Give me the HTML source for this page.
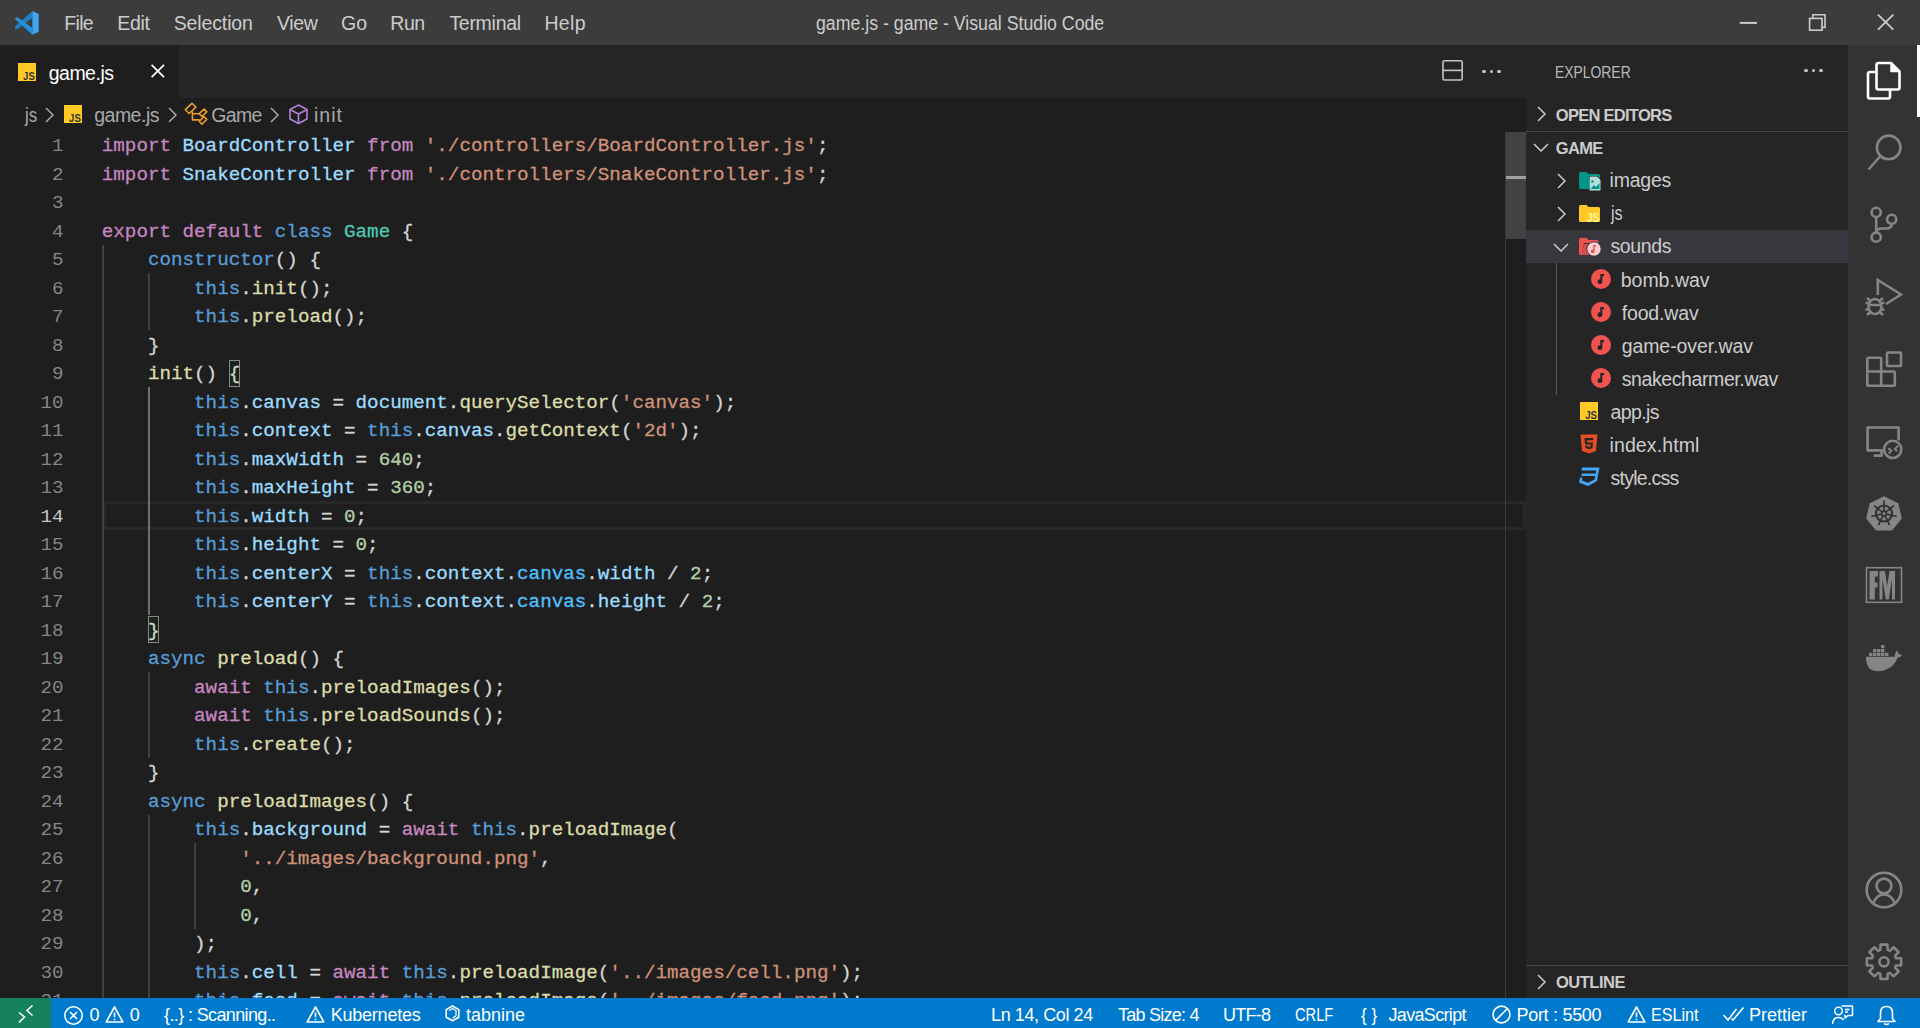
<!DOCTYPE html><html><head><meta charset="utf-8"><title>game.js - game - Visual Studio Code</title><style>html,body{margin:0;padding:0}
body{width:1920px;height:1028px;position:relative;overflow:hidden;background:#1e1e1e;font-family:"Liberation Sans", sans-serif}
.t{position:absolute;white-space:pre;line-height:1;font-family:"Liberation Sans", sans-serif}
.cl{position:absolute;left:101.8px;white-space:pre;font-family:"Liberation Mono", monospace;font-size:19.233px;line-height:1;-webkit-text-stroke:0.3px currentColor}
.cl span{-webkit-text-stroke:0.3px currentColor}
.ln{position:absolute;left:0;width:63.5px;text-align:right;white-space:pre;font-family:"Liberation Mono", monospace;font-size:19.233px;line-height:1}
</style></head><body><div style="position:absolute;left:0;top:0;width:1920px;height:45px;background:#3c3c3c"></div><svg style="position:absolute;left:8px;top:4px" width="40" height="38" viewBox="0 0 40 38">
<path d="M24.4 7 L24.4 13.9 L9.4 25.1 Q8.2 25.8 7 24.6 L7 22.6 Z" fill="#1f7fc4"/>
<path d="M9.1 12.9 L24.4 23.8 L24.4 30.7 L6.8 15 Q6.8 13.6 9.1 12.9 Z" fill="#2490da"/>
<path d="M24.4 7 L30.7 10 L30.7 27.7 L24.4 30.7 Z" fill="#3ea7f2"/>
</svg><svg style="position:absolute;left:1720px;top:0px" width="200" height="45" viewBox="1720 0 200 45" fill="none" stroke="#cccccc">
<path d="M1739.8 22.9 H1757" stroke-width="2"/>
<rect x="1809.6" y="18.4" width="12.4" height="11.8" stroke-width="1.6"/>
<path d="M1812.9 18.4 V14.7 H1825 V27.4 H1822" stroke-width="1.6"/>
<path d="M1878 14.6 L1893.3 29.6 M1893.3 14.6 L1878 29.6" stroke-width="1.8"/>
</svg><div style="position:absolute;left:0;top:45px;width:1526px;height:52.5px;background:#252526"></div><div style="position:absolute;left:0;top:45px;width:179px;height:52.5px;background:#1e1e1e"></div><svg style="position:absolute;left:18px;top:62.8px" width="18.3" height="18.3" viewBox="0 0 18 18"><rect width="18" height="18" fill="#ffca28"/><text x="5" y="16.3" font-family="Liberation Sans" font-weight="bold" font-size="11.2" textLength="11.5" lengthAdjust="spacingAndGlyphs" fill="#323232">JS</text></svg><svg style="position:absolute;left:147px;top:60px" width="21" height="21" viewBox="0 0 21 21" fill="none" stroke="#ffffff" stroke-width="1.7">
<path d="M4.6 4.8 L17 17.2 M17 4.8 L4.6 17.2"/></svg><svg style="position:absolute;left:1440px;top:58px" width="25" height="25" viewBox="0 0 25 25" fill="none" stroke="#c5c5c5" stroke-width="1.6">
<rect x="3" y="2.8" width="19.2" height="19.2" rx="1.5"/><path d="M3 12.4 H22.2"/></svg><div style="position:absolute;left:1482.4px;top:69.5px;width:3.2px;height:3.2px;border-radius:50%;background:#c5c5c5"></div><div style="position:absolute;left:1489.9px;top:69.5px;width:3.2px;height:3.2px;border-radius:50%;background:#c5c5c5"></div><div style="position:absolute;left:1497.4px;top:69.5px;width:3.2px;height:3.2px;border-radius:50%;background:#c5c5c5"></div><svg style="position:absolute;left:45px;top:106.5px" width="9" height="16" viewBox="0 0 9 16" fill="none" stroke="#a9a9a9" stroke-width="1.5"><path d="M1 1 L8 8.0 L1 15"/></svg><svg style="position:absolute;left:64px;top:104.9px" width="18.3" height="18.3" viewBox="0 0 18 18"><rect width="18" height="18" fill="#ffca28"/><text x="5" y="16.3" font-family="Liberation Sans" font-weight="bold" font-size="11.2" textLength="11.5" lengthAdjust="spacingAndGlyphs" fill="#323232">JS</text></svg><svg style="position:absolute;left:168px;top:106.5px" width="9" height="16" viewBox="0 0 9 16" fill="none" stroke="#a9a9a9" stroke-width="1.5"><path d="M1 1 L8 8.0 L1 15"/></svg><svg style="position:absolute;left:184px;top:101px" width="24" height="26" viewBox="0 0 24 26" fill="none" stroke="#ee9d28" stroke-width="1.6" stroke-linejoin="round">
<path d="M1.3 8.7 L8 2.3 L11.9 6.1 L5.1 12.5 Z"/><path d="M8.4 10.2 V18.9 H15.7 M8.4 12.7 H15.7"/>
<path d="M15.2 12.7 L20.1 8.1 L22.8 10.9 L17.9 15.5 Z"/><path d="M15.2 20.3 L20.1 15.7 L22.8 18.5 L17.9 23.1 Z"/></svg><svg style="position:absolute;left:270px;top:106.5px" width="9" height="16" viewBox="0 0 9 16" fill="none" stroke="#a9a9a9" stroke-width="1.5"><path d="M1 1 L8 8.0 L1 15"/></svg><svg style="position:absolute;left:287px;top:102.5px" width="23" height="23" viewBox="0 0 23 23" fill="none" stroke="#b180d7" stroke-width="1.6" stroke-linejoin="round">
<path d="M11.5 2 L20 6.5 V16 L11.5 20.5 L3 16 V6.5 Z"/><path d="M3 6.5 L11.5 11 L20 6.5 M11.5 11 V20.5"/></svg><div style="position:absolute;left:103px;top:501.0px;width:1423px;height:28.5px;box-sizing:border-box;border:3px solid #282828"></div><div style="position:absolute;left:101.80px;top:244.50px;width:2px;height:798.00px;background:#404040"></div><div style="position:absolute;left:147.96px;top:273.00px;width:2px;height:57.00px;background:#404040"></div><div style="position:absolute;left:147.96px;top:387.00px;width:2px;height:228.00px;background:#707070"></div><div style="position:absolute;left:147.96px;top:672.00px;width:2px;height:85.50px;background:#404040"></div><div style="position:absolute;left:147.96px;top:814.50px;width:2px;height:228.00px;background:#404040"></div><div style="position:absolute;left:194.12px;top:843.00px;width:2px;height:85.50px;background:#404040"></div><div style="position:absolute;left:228.74px;top:359.50px;width:11.54px;height:27.00px;box-sizing:border-box;border:1.5px solid #888888;background:rgba(0,100,0,0.1)"></div><div style="position:absolute;left:147.96px;top:616.00px;width:11.54px;height:27.00px;box-sizing:border-box;border:1.5px solid #888888;background:rgba(0,100,0,0.1)"></div><div class="cl" style="top:137.16px"><span style="color:#c586c0">import</span><span style="color:#d4d4d4"> </span><span style="color:#9cdcfe">BoardController</span><span style="color:#d4d4d4"> </span><span style="color:#c586c0">from</span><span style="color:#d4d4d4"> </span><span style="color:#ce9178">&#x27;./controllers/BoardController.js&#x27;</span><span style="color:#d4d4d4">;</span></div><div class="ln" style="top:137.16px;color:#858585">1</div><div class="cl" style="top:165.66px"><span style="color:#c586c0">import</span><span style="color:#d4d4d4"> </span><span style="color:#9cdcfe">SnakeController</span><span style="color:#d4d4d4"> </span><span style="color:#c586c0">from</span><span style="color:#d4d4d4"> </span><span style="color:#ce9178">&#x27;./controllers/SnakeController.js&#x27;</span><span style="color:#d4d4d4">;</span></div><div class="ln" style="top:165.66px;color:#858585">2</div><div class="cl" style="top:194.16px"></div><div class="ln" style="top:194.16px;color:#858585">3</div><div class="cl" style="top:222.66px"><span style="color:#c586c0">export</span><span style="color:#d4d4d4"> </span><span style="color:#c586c0">default</span><span style="color:#d4d4d4"> </span><span style="color:#569cd6">class</span><span style="color:#d4d4d4"> </span><span style="color:#4ec9b0">Game</span><span style="color:#d4d4d4"> {</span></div><div class="ln" style="top:222.66px;color:#858585">4</div><div class="cl" style="top:251.16px"><span style="color:#d4d4d4">    </span><span style="color:#569cd6">constructor</span><span style="color:#d4d4d4">() {</span></div><div class="ln" style="top:251.16px;color:#858585">5</div><div class="cl" style="top:279.66px"><span style="color:#d4d4d4">        </span><span style="color:#569cd6">this</span><span style="color:#d4d4d4">.</span><span style="color:#dcdcaa">init</span><span style="color:#d4d4d4">();</span></div><div class="ln" style="top:279.66px;color:#858585">6</div><div class="cl" style="top:308.16px"><span style="color:#d4d4d4">        </span><span style="color:#569cd6">this</span><span style="color:#d4d4d4">.</span><span style="color:#dcdcaa">preload</span><span style="color:#d4d4d4">();</span></div><div class="ln" style="top:308.16px;color:#858585">7</div><div class="cl" style="top:336.66px"><span style="color:#d4d4d4">    }</span></div><div class="ln" style="top:336.66px;color:#858585">8</div><div class="cl" style="top:365.16px"><span style="color:#d4d4d4">    </span><span style="color:#dcdcaa">init</span><span style="color:#d4d4d4">() {</span></div><div class="ln" style="top:365.16px;color:#858585">9</div><div class="cl" style="top:393.66px"><span style="color:#d4d4d4">        </span><span style="color:#569cd6">this</span><span style="color:#d4d4d4">.</span><span style="color:#9cdcfe">canvas</span><span style="color:#d4d4d4"> = </span><span style="color:#9cdcfe">document</span><span style="color:#d4d4d4">.</span><span style="color:#dcdcaa">querySelector</span><span style="color:#d4d4d4">(</span><span style="color:#ce9178">&#x27;canvas&#x27;</span><span style="color:#d4d4d4">);</span></div><div class="ln" style="top:393.66px;color:#858585">10</div><div class="cl" style="top:422.16px"><span style="color:#d4d4d4">        </span><span style="color:#569cd6">this</span><span style="color:#d4d4d4">.</span><span style="color:#9cdcfe">context</span><span style="color:#d4d4d4"> = </span><span style="color:#569cd6">this</span><span style="color:#d4d4d4">.</span><span style="color:#9cdcfe">canvas</span><span style="color:#d4d4d4">.</span><span style="color:#dcdcaa">getContext</span><span style="color:#d4d4d4">(</span><span style="color:#ce9178">&#x27;2d&#x27;</span><span style="color:#d4d4d4">);</span></div><div class="ln" style="top:422.16px;color:#858585">11</div><div class="cl" style="top:450.66px"><span style="color:#d4d4d4">        </span><span style="color:#569cd6">this</span><span style="color:#d4d4d4">.</span><span style="color:#9cdcfe">maxWidth</span><span style="color:#d4d4d4"> = </span><span style="color:#b5cea8">640</span><span style="color:#d4d4d4">;</span></div><div class="ln" style="top:450.66px;color:#858585">12</div><div class="cl" style="top:479.16px"><span style="color:#d4d4d4">        </span><span style="color:#569cd6">this</span><span style="color:#d4d4d4">.</span><span style="color:#9cdcfe">maxHeight</span><span style="color:#d4d4d4"> = </span><span style="color:#b5cea8">360</span><span style="color:#d4d4d4">;</span></div><div class="ln" style="top:479.16px;color:#858585">13</div><div class="cl" style="top:507.66px"><span style="color:#d4d4d4">        </span><span style="color:#569cd6">this</span><span style="color:#d4d4d4">.</span><span style="color:#9cdcfe">width</span><span style="color:#d4d4d4"> = </span><span style="color:#b5cea8">0</span><span style="color:#d4d4d4">;</span></div><div class="ln" style="top:507.66px;color:#c6c6c6">14</div><div class="cl" style="top:536.16px"><span style="color:#d4d4d4">        </span><span style="color:#569cd6">this</span><span style="color:#d4d4d4">.</span><span style="color:#9cdcfe">height</span><span style="color:#d4d4d4"> = </span><span style="color:#b5cea8">0</span><span style="color:#d4d4d4">;</span></div><div class="ln" style="top:536.16px;color:#858585">15</div><div class="cl" style="top:564.66px"><span style="color:#d4d4d4">        </span><span style="color:#569cd6">this</span><span style="color:#d4d4d4">.</span><span style="color:#9cdcfe">centerX</span><span style="color:#d4d4d4"> = </span><span style="color:#569cd6">this</span><span style="color:#d4d4d4">.</span><span style="color:#9cdcfe">context</span><span style="color:#d4d4d4">.</span><span style="color:#4fc1ff">canvas</span><span style="color:#d4d4d4">.</span><span style="color:#9cdcfe">width</span><span style="color:#d4d4d4"> / </span><span style="color:#b5cea8">2</span><span style="color:#d4d4d4">;</span></div><div class="ln" style="top:564.66px;color:#858585">16</div><div class="cl" style="top:593.16px"><span style="color:#d4d4d4">        </span><span style="color:#569cd6">this</span><span style="color:#d4d4d4">.</span><span style="color:#9cdcfe">centerY</span><span style="color:#d4d4d4"> = </span><span style="color:#569cd6">this</span><span style="color:#d4d4d4">.</span><span style="color:#9cdcfe">context</span><span style="color:#d4d4d4">.</span><span style="color:#4fc1ff">canvas</span><span style="color:#d4d4d4">.</span><span style="color:#9cdcfe">height</span><span style="color:#d4d4d4"> / </span><span style="color:#b5cea8">2</span><span style="color:#d4d4d4">;</span></div><div class="ln" style="top:593.16px;color:#858585">17</div><div class="cl" style="top:621.66px"><span style="color:#d4d4d4">    }</span></div><div class="ln" style="top:621.66px;color:#858585">18</div><div class="cl" style="top:650.16px"><span style="color:#d4d4d4">    </span><span style="color:#569cd6">async</span><span style="color:#d4d4d4"> </span><span style="color:#dcdcaa">preload</span><span style="color:#d4d4d4">() {</span></div><div class="ln" style="top:650.16px;color:#858585">19</div><div class="cl" style="top:678.66px"><span style="color:#d4d4d4">        </span><span style="color:#c586c0">await</span><span style="color:#d4d4d4"> </span><span style="color:#569cd6">this</span><span style="color:#d4d4d4">.</span><span style="color:#dcdcaa">preloadImages</span><span style="color:#d4d4d4">();</span></div><div class="ln" style="top:678.66px;color:#858585">20</div><div class="cl" style="top:707.16px"><span style="color:#d4d4d4">        </span><span style="color:#c586c0">await</span><span style="color:#d4d4d4"> </span><span style="color:#569cd6">this</span><span style="color:#d4d4d4">.</span><span style="color:#dcdcaa">preloadSounds</span><span style="color:#d4d4d4">();</span></div><div class="ln" style="top:707.16px;color:#858585">21</div><div class="cl" style="top:735.66px"><span style="color:#d4d4d4">        </span><span style="color:#569cd6">this</span><span style="color:#d4d4d4">.</span><span style="color:#dcdcaa">create</span><span style="color:#d4d4d4">();</span></div><div class="ln" style="top:735.66px;color:#858585">22</div><div class="cl" style="top:764.16px"><span style="color:#d4d4d4">    }</span></div><div class="ln" style="top:764.16px;color:#858585">23</div><div class="cl" style="top:792.66px"><span style="color:#d4d4d4">    </span><span style="color:#569cd6">async</span><span style="color:#d4d4d4"> </span><span style="color:#dcdcaa">preloadImages</span><span style="color:#d4d4d4">() {</span></div><div class="ln" style="top:792.66px;color:#858585">24</div><div class="cl" style="top:821.16px"><span style="color:#d4d4d4">        </span><span style="color:#569cd6">this</span><span style="color:#d4d4d4">.</span><span style="color:#9cdcfe">background</span><span style="color:#d4d4d4"> = </span><span style="color:#c586c0">await</span><span style="color:#d4d4d4"> </span><span style="color:#569cd6">this</span><span style="color:#d4d4d4">.</span><span style="color:#dcdcaa">preloadImage</span><span style="color:#d4d4d4">(</span></div><div class="ln" style="top:821.16px;color:#858585">25</div><div class="cl" style="top:849.66px"><span style="color:#d4d4d4">            </span><span style="color:#ce9178">&#x27;../images/background.png&#x27;</span><span style="color:#d4d4d4">,</span></div><div class="ln" style="top:849.66px;color:#858585">26</div><div class="cl" style="top:878.16px"><span style="color:#d4d4d4">            </span><span style="color:#b5cea8">0</span><span style="color:#d4d4d4">,</span></div><div class="ln" style="top:878.16px;color:#858585">27</div><div class="cl" style="top:906.66px"><span style="color:#d4d4d4">            </span><span style="color:#b5cea8">0</span><span style="color:#d4d4d4">,</span></div><div class="ln" style="top:906.66px;color:#858585">28</div><div class="cl" style="top:935.16px"><span style="color:#d4d4d4">        );</span></div><div class="ln" style="top:935.16px;color:#858585">29</div><div class="cl" style="top:963.66px"><span style="color:#d4d4d4">        </span><span style="color:#569cd6">this</span><span style="color:#d4d4d4">.</span><span style="color:#9cdcfe">cell</span><span style="color:#d4d4d4"> = </span><span style="color:#c586c0">await</span><span style="color:#d4d4d4"> </span><span style="color:#569cd6">this</span><span style="color:#d4d4d4">.</span><span style="color:#dcdcaa">preloadImage</span><span style="color:#d4d4d4">(</span><span style="color:#ce9178">&#x27;../images/cell.png&#x27;</span><span style="color:#d4d4d4">);</span></div><div class="ln" style="top:963.66px;color:#858585">30</div><div class="cl" style="top:992.16px"><span style="color:#d4d4d4">        </span><span style="color:#569cd6">this</span><span style="color:#d4d4d4">.</span><span style="color:#9cdcfe">food</span><span style="color:#d4d4d4"> = </span><span style="color:#c586c0">await</span><span style="color:#d4d4d4"> </span><span style="color:#569cd6">this</span><span style="color:#d4d4d4">.</span><span style="color:#dcdcaa">preloadImage</span><span style="color:#d4d4d4">(</span><span style="color:#ce9178">&#x27;../images/food.png&#x27;</span><span style="color:#d4d4d4">);</span></div><div class="ln" style="top:992.16px;color:#858585">31</div><div style="position:absolute;left:1505px;top:130.5px;width:1px;height:867.5px;background:#3a3a3a"></div><div style="position:absolute;left:1506px;top:131.5px;width:20px;height:107px;background:#424242"></div><div style="position:absolute;left:1506px;top:176px;width:20px;height:3px;background:#a0a0a0"></div><div style="position:absolute;left:1526px;top:45px;width:322px;height:953px;background:#252526"></div><div style="position:absolute;left:1804.4px;top:69px;width:3.2px;height:3.2px;border-radius:50%;background:#c5c5c5"></div><div style="position:absolute;left:1811.9px;top:69px;width:3.2px;height:3.2px;border-radius:50%;background:#c5c5c5"></div><div style="position:absolute;left:1819.4px;top:69px;width:3.2px;height:3.2px;border-radius:50%;background:#c5c5c5"></div><svg style="position:absolute;left:1537px;top:106px" width="9" height="16" viewBox="0 0 9 16" fill="none" stroke="#cccccc" stroke-width="1.5"><path d="M1 1 L8 8.0 L1 15"/></svg><div style="position:absolute;left:1526px;top:130.5px;width:322px;height:1.5px;background:#454545"></div><svg style="position:absolute;left:1533px;top:143px" width="16" height="9" viewBox="0 0 16 9" fill="none" stroke="#cccccc" stroke-width="1.5"><path d="M1 1 L8.0 8 L15 1"/></svg><div style="position:absolute;left:1526px;top:230px;width:322px;height:33px;background:#37373d"></div><svg style="position:absolute;left:1557px;top:172.5px" width="9" height="16" viewBox="0 0 9 16" fill="none" stroke="#cccccc" stroke-width="1.5"><path d="M1 1 L8 8.0 L1 15"/></svg><svg style="position:absolute;left:1557px;top:205.5px" width="9" height="16" viewBox="0 0 9 16" fill="none" stroke="#cccccc" stroke-width="1.5"><path d="M1 1 L8 8.0 L1 15"/></svg><svg style="position:absolute;left:1553px;top:242.5px" width="16" height="9" viewBox="0 0 16 9" fill="none" stroke="#cccccc" stroke-width="1.5"><path d="M1 1 L8.0 8 L15 1"/></svg><svg style="position:absolute;left:1579px;top:171.5px" width="21" height="17" viewBox="0 0 21 17"><path d="M0 1.5 Q0 0 1.5 0 H7.5 L9.5 2 H19.5 Q21 2 21 3.5 V15.5 Q21 17 19.5 17 H1.5 Q0 17 0 15.5 Z" fill="#009688"/></svg><svg style="position:absolute;left:1589px;top:176px" width="12" height="15" viewBox="0 0 12 15"><path d="M1 0 H8 L12 4 V14 Q12 15 11 15 H1 Q0 15 0 14 V1 Q0 0 1 0 Z" fill="#b2dfdb" stroke="#252526" stroke-width="1"/><circle cx="3.5" cy="5.5" r="1.3" fill="#009688"/><path d="M1.5 13 L5 9 L7 11 L10.5 7 V13 Z" fill="#009688"/></svg><svg style="position:absolute;left:1579px;top:204.5px" width="21" height="17" viewBox="0 0 21 17"><path d="M0 1.5 Q0 0 1.5 0 H7.5 L9.5 2 H19.5 Q21 2 21 3.5 V15.5 Q21 17 19.5 17 H1.5 Q0 17 0 15.5 Z" fill="#ffca28"/></svg><svg style="position:absolute;left:1585px;top:208px" width="18" height="16" viewBox="0 0 18 16"><text x="1.8" y="14.3" font-family="Liberation Sans" font-weight="bold" font-size="13" textLength="12.8" lengthAdjust="spacingAndGlyphs" fill="#fff59d">JS</text></svg><svg style="position:absolute;left:1579px;top:237.5px" width="21" height="17" viewBox="0 0 21 17"><path d="M0 1.5 Q0 0 1.5 0 H7.5 L9.5 2 H18 Q19.5 2 19.5 3.5 V5 H5 L2.5 17 H1.5 Q0 17 0 15.5 Z" fill="#ef5350"/><path d="M5 6 H21 L18.5 17 H2.5 Z" fill="#ef5350" opacity="0.85"/></svg><svg style="position:absolute;left:1586px;top:241px" width="16" height="16" viewBox="0 0 16 16"><circle cx="8" cy="8" r="7.2" fill="#ffcdd2" stroke="#37373d" stroke-width="1"/><path d="M7.2 4 H10 V5.6 H8.6 V10 A1.9 1.9 0 1 1 7.2 8.6 Z" fill="#ef5350"/></svg><div style="position:absolute;left:1556px;top:263px;width:1px;height:132px;background:#585858"></div><svg style="position:absolute;left:1591px;top:269px" width="20" height="20" viewBox="0 0 20 20"><circle cx="10" cy="10" r="10" fill="#ef5350"/><path d="M9.3 5 H13 V7.2 H11.3 V12.2 A2.4 2.4 0 1 1 9.3 10.2 Z" fill="#252526"/></svg><svg style="position:absolute;left:1591px;top:302px" width="20" height="20" viewBox="0 0 20 20"><circle cx="10" cy="10" r="10" fill="#ef5350"/><path d="M9.3 5 H13 V7.2 H11.3 V12.2 A2.4 2.4 0 1 1 9.3 10.2 Z" fill="#252526"/></svg><svg style="position:absolute;left:1591px;top:335px" width="20" height="20" viewBox="0 0 20 20"><circle cx="10" cy="10" r="10" fill="#ef5350"/><path d="M9.3 5 H13 V7.2 H11.3 V12.2 A2.4 2.4 0 1 1 9.3 10.2 Z" fill="#252526"/></svg><svg style="position:absolute;left:1591px;top:368px" width="20" height="20" viewBox="0 0 20 20"><circle cx="10" cy="10" r="10" fill="#ef5350"/><path d="M9.3 5 H13 V7.2 H11.3 V12.2 A2.4 2.4 0 1 1 9.3 10.2 Z" fill="#252526"/></svg><svg style="position:absolute;left:1579.7px;top:401.6px" width="18.5" height="18.5" viewBox="0 0 18 18"><rect width="18" height="18" fill="#ffca28"/><text x="5" y="16.3" font-family="Liberation Sans" font-weight="bold" font-size="11.2" textLength="11.5" lengthAdjust="spacingAndGlyphs" fill="#323232">JS</text></svg><svg style="position:absolute;left:1580px;top:434px" width="18" height="20" viewBox="0 0 18 20"><path d="M0.5 0.5 H17.5 L16 17 L9 19.5 L2 17 Z" fill="#e44d26"/><path d="M4.5 4 H13.5 L13.2 6.3 H7 L7.2 8.5 H13 L12.4 14 L9 15.2 L5.6 14 L5.4 11.5 H7.5 L7.6 12.6 L9 13 L10.4 12.6 L10.6 10.6 H5.1 Z" fill="#252526"/></svg><svg style="position:absolute;left:1578px;top:467px" width="22" height="20" viewBox="0 0 22 20"><path d="M4 0.5 H21.5 L19 14 L10 19 L1 15.5 L2.2 10.5 L4.5 10.5 L4 13.5 L10 15.8 L16.5 12.5 L17.2 9 H3.3 L3.8 6.5 H17.7 L18.2 3.5 H3.5 Z" fill="#42a5f5"/></svg><div style="position:absolute;left:1526px;top:964.5px;width:322px;height:1.5px;background:#454545"></div><svg style="position:absolute;left:1537px;top:974px" width="9" height="16" viewBox="0 0 9 16" fill="none" stroke="#cccccc" stroke-width="1.5"><path d="M1 1 L8 8.0 L1 15"/></svg><div style="position:absolute;left:1848px;top:45px;width:72px;height:953px;background:#333333"></div><div style="position:absolute;left:1917px;top:45px;width:3px;height:72px;background:#ffffff"></div><svg style="position:absolute;left:1848px;top:45px" width="72" height="72" viewBox="0 0 72 72" fill="none" stroke="#ffffff" stroke-width="2.6" stroke-linejoin="round">
<path d="M28 27 H22 Q20 27 20 29 V51.5 Q20 53.5 22 53.5 H40 Q42 53.5 42 51.5 V45"/>
<path d="M30.5 18 H43 L51.5 26.5 V42.5 Q51.5 44.5 49.5 44.5 H30.5 Q28.5 44.5 28.5 42.5 V20 Q28.5 18 30.5 18 Z"/><path d="M43 18 V26.5 H51.5 Z" fill="#ffffff" stroke-width="1.5"/></svg><svg style="position:absolute;left:1848px;top:117px" width="72" height="72" viewBox="0 0 72 72" fill="none" stroke="#858585" stroke-width="2.6">
<circle cx="40.7" cy="30.4" r="11.8"/><path d="M32.5 39 L20.5 52.5"/></svg><svg style="position:absolute;left:1848px;top:189px" width="72" height="72" viewBox="0 0 72 72" fill="none" stroke="#858585" stroke-width="2.6">
<circle cx="28.2" cy="23.4" r="4.6"/><circle cx="43.7" cy="30.3" r="4.6"/><circle cx="28.2" cy="48.2" r="4.6"/>
<path d="M28.2 28 V43.6"/><path d="M43.7 35 Q43.7 39.5 38 39.5 H34 Q28.2 39.5 28.2 43.6"/></svg><svg style="position:absolute;left:1848px;top:261px" width="72" height="72" viewBox="0 0 72 72" fill="none" stroke="#858585" stroke-width="2.6">
<path d="M29.8 34 V19 L53 33.5 L38 43"/>
<ellipse cx="27" cy="45.5" rx="6.5" ry="7.5"/><path d="M20.5 44 H33.5 M17.5 42 H20.5 M33.5 42 H36.5 M17.5 48.5 H20.5 M33.5 48.5 H36.5 M19 37 L22 39.5 M35 37 L32 39.5 M19 54 L22 51.5 M35 54 L32 51.5"/></svg><svg style="position:absolute;left:1848px;top:333px" width="72" height="72" viewBox="0 0 72 72" fill="none" stroke="#858585" stroke-width="2.6" stroke-linejoin="round">
<path d="M19.3 26 Q19.3 24.7 20.6 24.7 H32 Q33.2 24.7 33.2 26 V38.5 H45.5 Q46.8 38.5 46.8 39.8 V51.5 Q46.8 52.8 45.5 52.8 H20.6 Q19.3 52.8 19.3 51.5 Z"/><path d="M19.3 38.5 H33.2 V52.8"/>
<rect x="39" y="19.5" width="14" height="13.5" rx="1.3"/></svg><svg style="position:absolute;left:1848px;top:405px" width="72" height="72" viewBox="0 0 72 72" fill="none" stroke="#858585" stroke-width="2.6">
<path d="M50.6 35.5 V22.5 H19.6 V45.4 H33.6 V50.6 H25.7" stroke-linejoin="round"/>
<circle cx="44.7" cy="44.4" r="8.6"/><path d="M40.3 43.2 L43.4 45.6 L40.7 48.7 M50 40.9 L46.9 44 L49.2 46.3" stroke-width="2"/></svg><svg style="position:absolute;left:1848px;top:477px" width="72" height="72" viewBox="0 0 72 72">
<path d="M36 19.3 L50.3 26.2 L53.8 41.6 L44 53.6 H28 L18.2 41.6 L21.7 26.2 Z" fill="#858585"/>
<g stroke="#333333" fill="none"><circle cx="36" cy="36.5" r="8" stroke-width="2.2"/><circle cx="36" cy="36.5" r="2.4" stroke-width="1.6"/>
<path d="M36.00 33.90 L36.00 24.20 M38.03 34.88 L45.62 28.83 M38.53 37.08 L47.99 39.24 M37.13 38.84 L41.34 47.58 M34.87 38.84 L30.66 47.58 M33.47 37.08 L24.01 39.24 M33.97 34.88 L26.38 28.83 " stroke-width="1.7" stroke-linecap="round"/></g></svg><svg style="position:absolute;left:1848px;top:549px" width="72" height="72" viewBox="0 0 72 72">
<rect x="18.5" y="18.7" width="35" height="34.6" fill="none" stroke="#858585" stroke-width="1.6"/>
<path d="M21.5 22 H30 V27.5 H26.8 V33.5 H29.5 V38.5 H26.8 V50.5 H21.5 Z" fill="#858585"/>
<path d="M31.5 22 H37 L39.2 37 L41.5 22 H47 V50.5 H44 V30 L40.8 50.5 H37.8 L34.5 30 V50.5 H31.5 Z" fill="#858585"/></svg><svg style="position:absolute;left:1848px;top:621px" width="72" height="72" viewBox="0 0 72 72" fill="#858585">
<path d="M18 35.7 H46.5 Q47 33 48.2 29.5 Q50.5 31 51 33.5 Q53 33 54 34.2 Q52.5 36.5 49.5 36.8 Q46.5 46 36 49.5 Q27 51.5 22 48 Q18 44 18 35.7 Z"/>
<g><rect x="21" y="31.8" width="3.4" height="3.2"/><rect x="25" y="31.8" width="3.4" height="3.2"/><rect x="29" y="31.8" width="3.4" height="3.2"/><rect x="33" y="31.8" width="3.4" height="3.2"/><rect x="37" y="31.8" width="3.4" height="3.2"/>
<rect x="25" y="28" width="3.4" height="3.2"/><rect x="29" y="28" width="3.4" height="3.2"/><rect x="33" y="28" width="3.4" height="3.2"/><rect x="33" y="24" width="3.4" height="3.2"/></g></svg><svg style="position:absolute;left:1848px;top:853px" width="72" height="72" viewBox="0 0 72 72" fill="none" stroke="#858585" stroke-width="2.6">
<circle cx="36" cy="37" r="17.3"/><circle cx="36" cy="33" r="7.4"/><path d="M25.5 49.5 Q29 41.5 36 41.5 Q43 41.5 46.5 49.5"/></svg><svg style="position:absolute;left:1848px;top:925px" width="72" height="72" viewBox="0 0 72 72" fill="none" stroke="#858585" stroke-width="2.6" stroke-linejoin="round">
<path d="M47.94 33.11 L53.15 33.32 L53.15 40.28 L47.94 40.49 L47.06 42.63 L50.59 46.47 L45.67 51.39 L41.83 47.86 L39.69 48.74 L39.48 53.95 L32.52 53.95 L32.31 48.74 L30.17 47.86 L26.33 51.39 L21.41 46.47 L24.94 42.63 L24.06 40.49 L18.85 40.28 L18.85 33.32 L24.06 33.11 L24.94 30.97 L21.41 27.13 L26.33 22.21 L30.17 25.74 L32.31 24.86 L32.52 19.65 L39.48 19.65 L39.69 24.86 L41.83 25.74 L45.67 22.21 L50.59 27.13 L47.06 30.97 Z"/><circle cx="36" cy="36.8" r="4.6"/></svg><div style="position:absolute;left:0;top:998px;width:1920px;height:30px;background:#007acc"></div><div style="position:absolute;left:0;top:998px;width:51px;height:30px;background:#16825d"></div><svg style="position:absolute;left:17px;top:1004px" width="18" height="20" viewBox="0 0 18 20" fill="none" stroke="#ffffff" stroke-width="1.6">
<path d="M2 8.5 L7.5 13 L2 18.5 M15.5 1.5 L10 6.5 L15.5 11.5"/></svg><svg style="position:absolute;left:62px;top:1003.5px" width="23" height="23" viewBox="0 0 23 23" fill="none" stroke="#ffffff" stroke-width="1.6">
<circle cx="11.5" cy="11.5" r="8.7"/><path d="M8 8 L15 15 M15 8 L8 15"/></svg><svg style="position:absolute;left:104.5px;top:1004.5px" width="19" height="19" viewBox="0 0 19 19" fill="none" stroke="#ffffff" stroke-width="1.6" stroke-linejoin="round"><path d="M9.5 2 L17.8 17 H1.2 Z"/><path d="M9.5 7.5 V12.3 M9.5 13.8 V15.3"/></svg><svg style="position:absolute;left:306px;top:1004.5px" width="19" height="19" viewBox="0 0 19 19" fill="none" stroke="#ffffff" stroke-width="1.6" stroke-linejoin="round"><path d="M9.5 2 L17.8 17 H1.2 Z"/><path d="M9.5 7.5 V12.3 M9.5 13.8 V15.3"/></svg><svg style="position:absolute;left:445px;top:1005px" width="15" height="17" viewBox="0 0 15 17" fill="none" stroke="#ffffff" stroke-width="1.6" stroke-linejoin="round">
<path d="M7.5 1 L13.8 4.6 V12.2 L7.5 15.8 L1.2 12.2 V4.6 Z"/><path d="M4 5.5 L7.5 3.5 L11 5.5 V11 L7.5 13" stroke-width="1.2"/></svg><svg style="position:absolute;left:1491px;top:1004px" width="21" height="21" viewBox="0 0 21 21" fill="none" stroke="#ffffff" stroke-width="1.6">
<circle cx="10.5" cy="10.5" r="8.4"/><path d="M4.5 16.5 L16.5 4.5"/></svg><svg style="position:absolute;left:1627px;top:1004.5px" width="19" height="19" viewBox="0 0 19 19" fill="none" stroke="#ffffff" stroke-width="1.6" stroke-linejoin="round"><path d="M9.5 2 L17.8 17 H1.2 Z"/><path d="M9.5 7.5 V12.3 M9.5 13.8 V15.3"/></svg><svg style="position:absolute;left:1722px;top:1005px" width="23" height="18" viewBox="0 0 23 18" fill="none" stroke="#ffffff" stroke-width="1.6">
<path d="M1.5 10 L6 15 L14.5 4 M9.5 13.5 L11 15 L21.5 2.5"/></svg><svg style="position:absolute;left:1831px;top:1003.5px" width="23" height="22" viewBox="0 0 23 22" fill="none" stroke="#ffffff" stroke-width="1.5" stroke-linejoin="round">
<circle cx="7.5" cy="7" r="3.8"/><path d="M1.5 20 Q2 13.5 7.5 13.5 Q11 13.5 12.5 16"/><path d="M10.5 2 H21.5 V11.5 H17 L14 14 V11.5 H13"/><path d="M14 5.5 H18.5 M14 8 H17"/></svg><svg style="position:absolute;left:1876px;top:1003.5px" width="21" height="22" viewBox="0 0 21 22" fill="none" stroke="#ffffff" stroke-width="1.6" stroke-linejoin="round">
<path d="M10.5 2.5 Q4.5 2.5 4.5 9 V14.5 L2 17.5 H19 L16.5 14.5 V9 Q16.5 2.5 10.5 2.5 Z"/><path d="M8 19.5 Q10.5 21.5 13 19.5"/></svg><div class="t" id="m_file" style="left:64.30px;top:13.99px;font-size:19.5px;color:#cccccc;font-weight:400;letter-spacing:-0.667px">File</div><div class="t" id="m_edit" style="left:117.30px;top:13.99px;font-size:19.5px;color:#cccccc;font-weight:400;letter-spacing:-0.333px">Edit</div><div class="t" id="m_sel" style="left:173.70px;top:13.99px;font-size:19.5px;color:#cccccc;font-weight:400;letter-spacing:-0.125px">Selection</div><div class="t" id="m_view" style="left:276.90px;top:13.99px;font-size:19.5px;color:#cccccc;font-weight:400;letter-spacing:-0.333px">View</div><div class="t" id="m_go" style="left:341.00px;top:13.99px;font-size:19.5px;color:#cccccc;font-weight:400;letter-spacing:-0.000px">Go</div><div class="t" id="m_run" style="left:390.30px;top:13.99px;font-size:19.5px;color:#cccccc;font-weight:400;letter-spacing:-0.500px">Run</div><div class="t" id="m_term" style="left:449.40px;top:13.99px;font-size:19.5px;color:#cccccc;font-weight:400;letter-spacing:-0.286px">Terminal</div><div class="t" id="m_help" style="left:544.40px;top:13.99px;font-size:19.5px;color:#cccccc;font-weight:400;letter-spacing:0.333px">Help</div><div class="t" id="title" style="left:816.00px;top:13.99px;font-size:19.5px;color:#cccccc;font-weight:400;letter-spacing:0.000px;transform:scaleX(0.9085);transform-origin:0 0">game.js - game - Visual Studio Code</div><div class="t" id="tab" style="left:48.70px;top:63.79px;font-size:19.5px;color:#ffffff;font-weight:400;letter-spacing:-0.500px">game.js</div><div class="t" id="bc_js" style="left:25.00px;top:105.79px;font-size:19.5px;color:#a9a9a9;font-weight:400;letter-spacing:0.000px;transform:scaleX(0.8667);transform-origin:0 0">js</div><div class="t" id="bc_game" style="left:94.20px;top:105.79px;font-size:19.5px;color:#a9a9a9;font-weight:400;letter-spacing:-0.500px">game.js</div><div class="t" id="bc_Game" style="left:211.30px;top:105.79px;font-size:19.5px;color:#a9a9a9;font-weight:400;letter-spacing:-0.667px">Game</div><div class="t" id="bc_init" style="left:314.00px;top:105.79px;font-size:19.5px;color:#a9a9a9;font-weight:400;letter-spacing:1.000px">init</div><div class="t" id="exp" style="left:1555.00px;top:64.23px;font-size:16.5px;color:#bbbbbb;font-weight:400;letter-spacing:0.000px;transform:scaleX(0.8421);transform-origin:0 0">EXPLORER</div><div class="t" id="s_open" style="left:1555.80px;top:107.33px;font-size:16.5px;color:#cccccc;font-weight:700;letter-spacing:-0.727px">OPEN EDITORS</div><div class="t" id="s_game" style="left:1555.80px;top:140.33px;font-size:16.5px;color:#cccccc;font-weight:700;letter-spacing:-0.667px">GAME</div><div class="t" id="f_images" style="left:1609.50px;top:171.09px;font-size:19.5px;color:#cccccc;font-weight:400;letter-spacing:-0.200px">images</div><div class="t" id="f_js" style="left:1611.00px;top:204.09px;font-size:19.5px;color:#cccccc;font-weight:400;letter-spacing:0.000px;transform:scaleX(0.8255);transform-origin:0 0">js</div><div class="t" id="f_sounds" style="left:1610.50px;top:237.09px;font-size:19.5px;color:#cccccc;font-weight:400;letter-spacing:-0.400px">sounds</div><div class="t" id="f_bomb" style="left:1620.70px;top:271.09px;font-size:19.5px;color:#cccccc;font-weight:400;letter-spacing:-0.000px">bomb.wav</div><div class="t" id="f_food" style="left:1621.70px;top:304.09px;font-size:19.5px;color:#cccccc;font-weight:400;letter-spacing:-0.143px">food.wav</div><div class="t" id="f_go" style="left:1621.70px;top:337.09px;font-size:19.5px;color:#cccccc;font-weight:400;letter-spacing:-0.083px">game-over.wav</div><div class="t" id="f_snake" style="left:1621.70px;top:370.09px;font-size:19.5px;color:#cccccc;font-weight:400;letter-spacing:-0.400px">snakecharmer.wav</div><div class="t" id="f_app" style="left:1610.50px;top:403.09px;font-size:19.5px;color:#cccccc;font-weight:400;letter-spacing:-0.600px">app.js</div><div class="t" id="f_index" style="left:1609.50px;top:436.09px;font-size:19.5px;color:#cccccc;font-weight:400;letter-spacing:0.111px">index.html</div><div class="t" id="f_style" style="left:1610.50px;top:469.09px;font-size:19.5px;color:#cccccc;font-weight:400;letter-spacing:-0.750px">style.css</div><div class="t" id="s_outline" style="left:1556.00px;top:974.03px;font-size:16.5px;color:#cccccc;font-weight:700;letter-spacing:-0.500px">OUTLINE</div><div class="t" id="sb_e0" style="left:89.50px;top:1006.16px;font-size:18px;color:#ffffff;font-weight:400;letter-spacing:0.000px">0</div><div class="t" id="sb_w0" style="left:129.80px;top:1006.16px;font-size:18px;color:#ffffff;font-weight:400;letter-spacing:0.000px">0</div><div class="t" id="sb_scan" style="left:164.00px;top:1006.16px;font-size:18px;color:#ffffff;font-weight:400;letter-spacing:-0.625px">{..} : Scanning..</div><div class="t" id="sb_kube" style="left:330.70px;top:1006.16px;font-size:18px;color:#ffffff;font-weight:400;letter-spacing:-0.222px">Kubernetes</div><div class="t" id="sb_tab9" style="left:466.00px;top:1006.16px;font-size:18px;color:#ffffff;font-weight:400;letter-spacing:0.000px">tabnine</div><div class="t" id="sb_ln" style="left:991.10px;top:1006.16px;font-size:18px;color:#ffffff;font-weight:400;letter-spacing:-0.417px">Ln 14, Col 24</div><div class="t" id="sb_ts" style="left:1117.90px;top:1006.16px;font-size:18px;color:#ffffff;font-weight:400;letter-spacing:-0.750px">Tab Size: 4</div><div class="t" id="sb_utf" style="left:1223.00px;top:1006.16px;font-size:18px;color:#ffffff;font-weight:400;letter-spacing:-0.750px">UTF-8</div><div class="t" id="sb_crlf" style="left:1295.00px;top:1006.16px;font-size:18px;color:#ffffff;font-weight:400;letter-spacing:0.000px;transform:scaleX(0.8156);transform-origin:0 0">CRLF</div><div class="t" id="sb_brace" style="left:1361.00px;top:1006.16px;font-size:18px;color:#ffffff;font-weight:400;letter-spacing:0.000px;transform:scaleX(0.9481);transform-origin:0 0">{ }</div><div class="t" id="sb_js" style="left:1388.50px;top:1006.16px;font-size:18px;color:#ffffff;font-weight:400;letter-spacing:-0.667px">JavaScript</div><div class="t" id="sb_port" style="left:1516.50px;top:1006.16px;font-size:18px;color:#ffffff;font-weight:400;letter-spacing:-0.300px">Port : 5500</div><div class="t" id="sb_eslint" style="left:1651.00px;top:1006.16px;font-size:18px;color:#ffffff;font-weight:400;letter-spacing:0.000px;transform:scaleX(0.8943);transform-origin:0 0">ESLint</div><div class="t" id="sb_prettier" style="left:1749.00px;top:1006.16px;font-size:18px;color:#ffffff;font-weight:400;letter-spacing:0.000px">Prettier</div></body></html>
